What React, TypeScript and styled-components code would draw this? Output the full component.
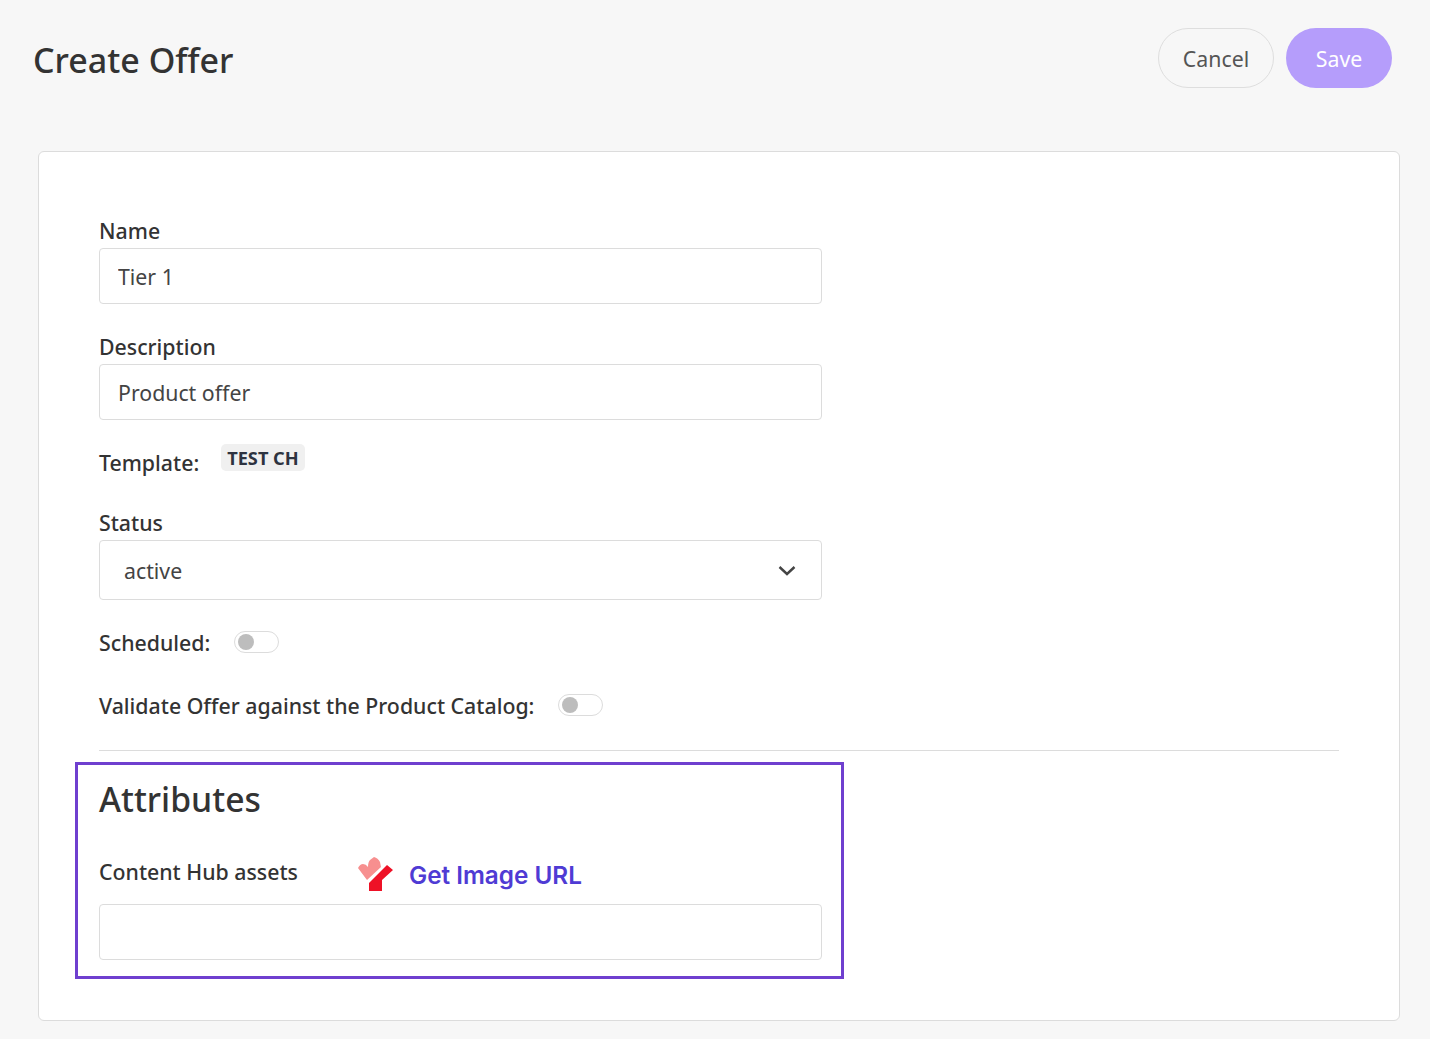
import React from 'react';
import styled, { createGlobalStyle } from 'styled-components';

const GlobalStyle = createGlobalStyle`
  html, body {
    margin: 0;
    padding: 0;
    background: #f7f7f7;
  }
  body {
    font-family: 'Noto Sans', 'Open Sans', sans-serif;
    color: #333;
  }
  * {
    box-sizing: border-box;
  }
`;

function App() {
  return (
    <>
      <GlobalStyle />
      <Page>
        <Header>
          <Title>Create Offer</Title>
          <Actions>
            <CancelButton type="button">Cancel</CancelButton>
            <SaveButton type="button">Save</SaveButton>
          </Actions>
        </Header>
        <Card>
          <Field>
            <Label>Name</Label>
            <TextBox defaultValue="Tier 1" />
          </Field>
          <Field>
            <Label>Description</Label>
            <TextBox defaultValue="Product offer" />
          </Field>
          <TemplateRow>
            <Label>Template:</Label>
            <Tag>TEST CH</Tag>
          </TemplateRow>
          <Field>
            <Label>Status</Label>
            <SelectBox>
              <span>active</span>
              <svg width="20" height="20" viewBox="0 0 20 20" fill="none">
                <path d="M2.5 7 L10 14 L17.5 7" stroke="#444" strokeWidth="2.4" />
              </svg>
            </SelectBox>
          </Field>
          <ToggleRow>
            <RowLabel>Scheduled:</RowLabel>
            <Toggle />
          </ToggleRow>
          <ToggleRow>
            <RowLabel>Validate Offer against the Product Catalog:</RowLabel>
            <Toggle />
          </ToggleRow>
          <Divider />
          <Highlight>
            <SectionTitle>Attributes</SectionTitle>
            <AssetRow>
              <Label>Content Hub assets</Label>
              <ImageLink>
                <svg width="36" height="36" viewBox="0 0 36 36">
                  <path
                    d="M1 13 Q3 9 6 9 Q9 9 11 12 Q11 7 13 5 L17 2 Q21 3 23 7 L24 12 L10 25 Z"
                    fill="#f78f8f"
                  />
                  <path d="M12 28 L30 10 L36 15 L25 25 L25 36 L12 36 Z" fill="#ee1126" />
                </svg>
                Get Image URL
              </ImageLink>
            </AssetRow>
            <TextBox />
          </Highlight>
        </Card>
      </Page>
    </>
  );
}

const Page = styled.div`
  width: 1430px;
  height: 1039px;
  padding: 28px 30px 0 38px;
  overflow: hidden;
`;

const Header = styled.div`
  display: flex;
  justify-content: space-between;
  align-items: center;
  height: 60px;
  margin: 0 8px 63px -5px;
`;

const Title = styled.h1`
  margin: 4px 0 0;
  font-size: 34px;
  font-weight: 500;
  color: #333;
  line-height: 64px;
`;

const Actions = styled.div`
  display: flex;
  gap: 12px;
`;

const CancelButton = styled.button`
  width: 116px;
  height: 60px;
  border: 1px solid #dedede;
  border-radius: 30px;
  background: transparent;
  color: #555;
  font-family: inherit;
  font-size: 21.3px;
`;

const SaveButton = styled.button`
  width: 106px;
  height: 60px;
  border: 0;
  border-radius: 30px;
  background: #b59dfb;
  color: #fff;
  font-family: inherit;
  font-size: 21.3px;
`;

const Card = styled.div`
  height: 870px;
  padding: 64px 60px 0;
  background: #fff;
  border: 1px solid #dcdcdc;
  border-radius: 6px;
`;

const Field = styled.div`
  margin-bottom: 28px;
`;

const Label = styled.label`
  display: block;
  padding-bottom: 2px;
  font-size: 21.3px;
  font-weight: 500;
  line-height: 30px;
  color: #333;
`;

const RowLabel = styled(Label)`
  padding: 2px 0 0;
  line-height: 28px;
`;

const TextBox = styled.input`
  display: block;
  width: 723px;
  height: 56px;
  padding: 0 18px;
  background: #fff;
  border: 1px solid #dcdcdc;
  border-radius: 4px;
  color: #444;
  font-family: inherit;
  font-size: 21.3px;
  outline: none;
`;

const TemplateRow = styled.div`
  display: flex;
  align-items: flex-start;
  gap: 22px;
  height: 60px;
`;

const Tag = styled.span`
  margin-top: -4px;
  padding: 1px 6px 0;
  height: 27px;
  line-height: 26px;
  font-size: 18.2px;
  font-weight: 700;
  color: #2d3340;
  background: #f0f0f0;
  border-radius: 5px;
`;

const SelectBox = styled.div`
  display: flex;
  justify-content: space-between;
  align-items: center;
  width: 723px;
  height: 60px;
  padding: 0 24px;
  border: 1px solid #dcdcdc;
  border-radius: 4px;
  color: #444;
  font-size: 21.3px;
`;

const ToggleRow = styled.div`
  display: flex;
  align-items: center;
  gap: 24px;
  height: 28px;
  & + & {
    margin-top: 35px;
  }
`;

const Toggle = styled.span`
  display: flex;
  align-items: center;
  width: 45px;
  height: 22px;
  padding-left: 3px;
  border: 1px solid #dcdcdc;
  border-radius: 11px;
  background: #fff;
  &::before {
    content: '';
    width: 16px;
    height: 16px;
    border-radius: 50%;
    background: #bdbdbd;
  }
`;

const Divider = styled.hr`
  margin: 31px 0 11px;
  border: 0;
  border-top: 1px solid #dcdcdc;
`;

const Highlight = styled.div`
  width: 769px;
  height: 217px;
  margin-left: -24px;
  padding: 8px 21px 0;
  border: 3px solid #6f3fcf;
`;

const SectionTitle = styled.h2`
  margin: 0 0 26px;
  font-size: 33.7px;
  font-weight: 500;
  line-height: 52px;
  color: #333;
`;

const AssetRow = styled.div`
  display: flex;
  align-items: center;
  gap: 59px;
  height: 44px;
  margin-bottom: 9px;
`;

const ImageLink = styled.a`
  display: flex;
  align-items: center;
  gap: 16px;
  margin-top: 3px;
  font-family: 'Inter', sans-serif;
  font-size: 24.3px;
  font-weight: 600;
  color: #4f3bd4;
  svg {
    margin-top: -4px;
  }
`;

export default App;
